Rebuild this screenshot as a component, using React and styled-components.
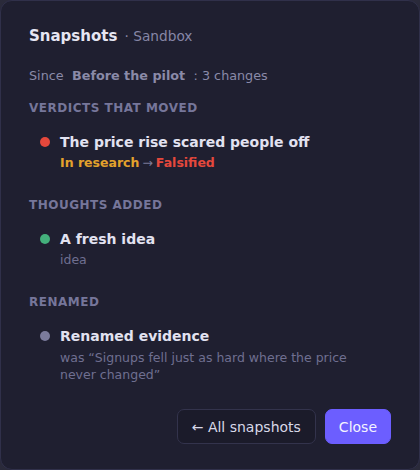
import React from 'react';
import styled, { createGlobalStyle } from 'styled-components';

const GlobalStyle = createGlobalStyle`
  html, body {
    margin: 0;
    padding: 0;
    background: #2a2a3a;
  }
  body {
    font-family: "DejaVu Sans", "Liberation Sans", sans-serif;
  }
`;

const Dialog = styled.div`
  box-sizing: border-box;
  width: 420px;
  height: 470px;
  background: #1f1f30;
  border: 1px solid #30304a;
  border-radius: 12px;
  padding: 25px 28px 0 28px;
  display: flex;
  flex-direction: column;
`;

const Title = styled.h2`
  margin: 0;
  font-size: 15px;
  line-height: 20px;
  font-weight: 700;
  color: #e6e6f2;
  span {
    font-weight: 400;
    font-size: 13.7px;
    margin-left: 2px;
    color: #8686a6;
  }
`;

const Since = styled.div`
  margin-top: 21px;
  font-size: 12.75px;
  line-height: 18px;
  color: #8a8aa8;
  b {
    font-weight: 700;
    margin: 0 8.5px;
  }
`;

const Section = styled.section`
  margin-top: ${({ first }) => (first ? '15px' : '26px')};
`;

const SectionTitle = styled.h3`
  margin: 0;
  font-size: 12px;
  line-height: 16px;
  font-weight: 700;
  letter-spacing: 0.5px;
  color: #76769a;
`;

const Item = styled.div`
  display: grid;
  grid-template-columns: 10px 1fr;
  column-gap: 10px;
  margin-top: 16px;
  padding-left: 11px;
  max-width: 330px;
`;

const Dot = styled.span`
  width: 10px;
  height: 10px;
  border-radius: 50%;
  background: ${({ color }) => color};
  margin-top: 5px;
`;

const ItemTitle = styled.div`
  font-size: 14px;
  line-height: 20px;
  font-weight: 700;
  color: #e2e2f0;
`;

const Sub = styled.div`
  margin-top: ${({ tight }) => (tight ? '3px' : '2px')};
  font-size: 12.5px;
  line-height: 17px;
  color: #6f6f90;
`;

const Verdict = styled.span`
  font-weight: 700;
  color: ${({ color }) => color};
`;

const Arrow = styled.span`
  color: #7a7a96;
  margin: 0 3px;
`;

const Footer = styled.div`
  margin-top: auto;
  margin-bottom: 25px;
  display: flex;
  justify-content: flex-end;
  gap: 9px;
`;

const Button = styled.button`
  font-family: inherit;
  font-size: 14px;
  height: 35px;
  padding: 0 ${({ primary }) => (primary ? '13px' : '14px')};
  border-radius: 7px;
  cursor: pointer;
  border: 1px solid ${({ primary }) => (primary ? '#6c5eff' : '#33334c')};
  background: ${({ primary }) => (primary ? '#6c5eff' : '#1b1b2a')};
  color: ${({ primary }) => (primary ? '#f4f3ff' : '#d8d8e8')};
`;

export default function App() {
  return (
    <>
      <GlobalStyle />
      <Dialog>
        <Title>
          Snapshots <span>· Sandbox</span>
        </Title>
        <Since>
          Since<b>Before the pilot</b>: 3 changes
        </Since>

        <Section first>
          <SectionTitle>VERDICTS THAT MOVED</SectionTitle>
          <Item>
            <Dot color="#e5483c" />
            <div>
              <ItemTitle>The price rise scared people off</ItemTitle>
              <Sub>
                <Verdict color="#e3a22c">In research</Verdict>
                <Arrow>→</Arrow>
                <Verdict color="#e5483c">Falsified</Verdict>
              </Sub>
            </div>
          </Item>
        </Section>

        <Section>
          <SectionTitle>THOUGHTS ADDED</SectionTitle>
          <Item>
            <Dot color="#44b07c" />
            <div>
              <ItemTitle>A fresh idea</ItemTitle>
              <Sub>idea</Sub>
            </div>
          </Item>
        </Section>

        <Section>
          <SectionTitle>RENAMED</SectionTitle>
          <Item>
            <Dot color="#7b7b9c" />
            <div>
              <ItemTitle>Renamed evidence</ItemTitle>
              <Sub tight>was “Signups fell just as hard where the price never changed”</Sub>
            </div>
          </Item>
        </Section>

        <Footer>
          <Button>← All snapshots</Button>
          <Button primary>Close</Button>
        </Footer>
      </Dialog>
    </>
  );
}
